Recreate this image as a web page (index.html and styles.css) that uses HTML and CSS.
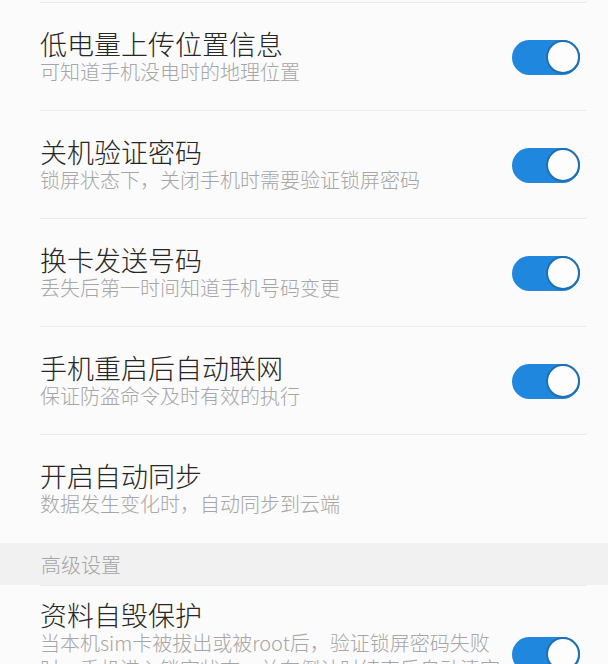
FILE: index.html
```html
<!DOCTYPE html>
<html lang="zh-CN">
<head>
<meta charset="utf-8">
<link rel="stylesheet" href="styles.css">
</head>
<body>
<div class="screen">
  <div class="list">
    <div class="row">
      <div class="text">
        <div class="title">低电量上传位置信息</div>
        <div class="desc">可知道手机没电时的地理位置</div>
      </div>
      <div class="switch on"><span class="knob"></span></div>
    </div>
    <div class="row">
      <div class="text">
        <div class="title">关机验证密码</div>
        <div class="desc">锁屏状态下，关闭手机时需要验证锁屏密码</div>
      </div>
      <div class="switch on"><span class="knob"></span></div>
    </div>
    <div class="row">
      <div class="text">
        <div class="title">换卡发送号码</div>
        <div class="desc">丢失后第一时间知道手机号码变更</div>
      </div>
      <div class="switch on"><span class="knob"></span></div>
    </div>
    <div class="row">
      <div class="text">
        <div class="title">手机重启后自动联网</div>
        <div class="desc">保证防盗命令及时有效的执行</div>
      </div>
      <div class="switch on"><span class="knob"></span></div>
    </div>
    <div class="row last">
      <div class="text">
        <div class="title">开启自动同步</div>
        <div class="desc">数据发生变化时，自动同步到云端</div>
      </div>
    </div>
  </div>
  <div class="section">高级设置</div>
  <div class="list">
    <div class="row tall">
      <div class="text narrow">
        <div class="title">资料自毁保护</div>
        <div class="desc">当本机sim卡被拔出或被root后，验证锁屏密码失败时，手机进入锁定状态，并在倒计时结束后自动清空手机数据，保护隐私安全</div>
      </div>
      <div class="switch on"><span class="knob"></span></div>
    </div>
  </div>
</div>
</body>
</html>
```
FILE: styles.css
```css
html, body {
  margin: 0;
  padding: 0;
  background: #fbfbfb;
}
body {
  width: 608px;
  height: 664px;
  overflow: hidden;
  font-family: "Noto Sans CJK SC", "Noto Sans", sans-serif;
}
.screen {
  padding-top: 2px;
}
.list {
  border-top: 1px solid #ebebeb;
  margin: 0 22px 0 40px;
}
.row {
  display: flex;
  align-items: center;
  justify-content: space-between;
  padding: 26px 6px 25px 0;
  border-bottom: 1px solid #ebebeb;
}
.row.last {
  border-bottom: none;
}
.row.tall {
  padding-top: 14px;
  border-bottom: none;
}
.text {
  display: flex;
  flex-direction: column;
}
.narrow {
  width: 462px;
}
.title {
  font-size: 27px;
  line-height: 30px;
  color: #262626;
  font-weight: 300;
}
.desc {
  font-size: 20px;
  line-height: 26px;
  color: #a6a6a6;
  font-weight: 300;
}
.section {
  background: #f1f1f1;
  height: 42px;
  padding-left: 41px;
  display: flex;
  align-items: center;
  font-size: 20px;
  font-weight: 300;
  color: #a4a4a4;
  margin-top: 1px;
}
.switch {
  width: 68px;
  height: 35px;
  border-radius: 18px;
  background: #1f87dd;
  position: relative;
  flex-shrink: 0;
}
.switch .knob {
  position: absolute;
  right: 0;
  top: 0;
  width: 30px;
  height: 30px;
  border-radius: 50%;
  background: #fdfdfd;
  border: 2.5px solid #1e6fb4;
}
```
